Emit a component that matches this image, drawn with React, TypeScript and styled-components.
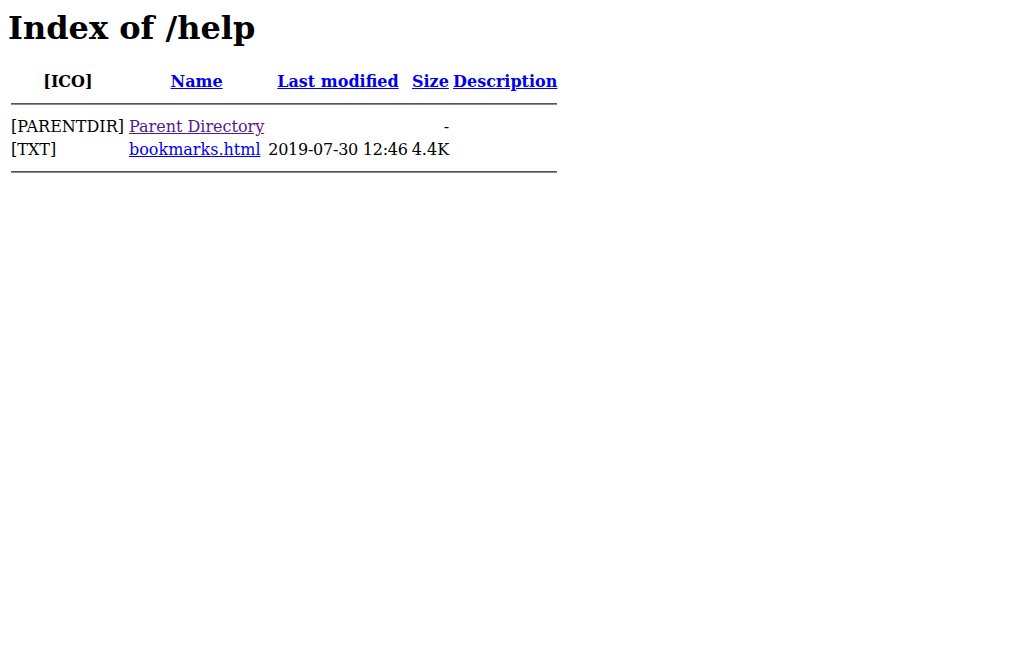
import styled, { createGlobalStyle } from "styled-components";

const GlobalStyle = createGlobalStyle`
  body {
    margin: 8px;
    font-family: "DejaVu Serif", serif;
    font-size: 16px;
    color: #000;
    background: #fff;
  }
`;

const Title = styled.h1`
  font-size: 2em;
  font-weight: bold;
  margin: 1px 0 22px;
`;

const Listing = styled.table`
  border-collapse: separate;
  border-spacing: 2px;
`;

const HeadCell = styled.th`
  font-weight: bold;
  text-align: center;
  vertical-align: top;
  padding: 1px;
`;

const Cell = styled.td<{ $right?: boolean }>`
  padding: 1px;
  text-align: ${(p) => (p.$right ? "right" : "left")};
  vertical-align: middle;
`;

const IconCell = styled(Cell)`
  vertical-align: top;
  padding-right: 2px;
`;

const DateCell = styled(Cell)`
  letter-spacing: -0.25px;
`;

const Link = styled.a<{ $visited?: boolean }>`
  color: ${(p) => (p.$visited ? "#551a8b" : "#0000ee")};
  text-decoration: underline;
  cursor: pointer;
`;

const Rule = styled.hr`
  margin: 0.5em auto;
  border: none;
  border-top: 1px solid #555;
  border-bottom: 1px solid #8a8a8a;
`;

const RuleCell = styled.th`
  padding: 1px;
`;

const files = [
  { icon: "[PARENTDIR]", name: "Parent Directory", date: "", size: "-", visited: true },
  { icon: "[TXT]", name: "bookmarks.html", date: "2019-07-30 12:46", size: "4.4K", visited: false },
];

const App = () => {
  return (
    <>
      <GlobalStyle />
      <Title>Index of /help</Title>
      <Listing>
        <tbody>
          <tr>
            <HeadCell>[ICO]</HeadCell>
            <HeadCell><Link>Name</Link></HeadCell>
            <HeadCell><Link>Last modified</Link></HeadCell>
            <HeadCell><Link>Size</Link></HeadCell>
            <HeadCell><Link>Description</Link></HeadCell>
          </tr>
          <tr>
            <RuleCell colSpan={5}><Rule /></RuleCell>
          </tr>
          {files.map((f) => (
            <tr key={f.name}>
              <IconCell>{f.icon}</IconCell>
              <Cell><Link $visited={f.visited}>{f.name}</Link></Cell>
              <DateCell $right={!!f.date}>{f.date || "\u00a0"}</DateCell>
              <Cell $right>{f.size}</Cell>
              <Cell>{"\u00a0"}</Cell>
            </tr>
          ))}
          <tr>
            <RuleCell colSpan={5}><Rule /></RuleCell>
          </tr>
        </tbody>
      </Listing>
    </>
  );
};

export default App;
